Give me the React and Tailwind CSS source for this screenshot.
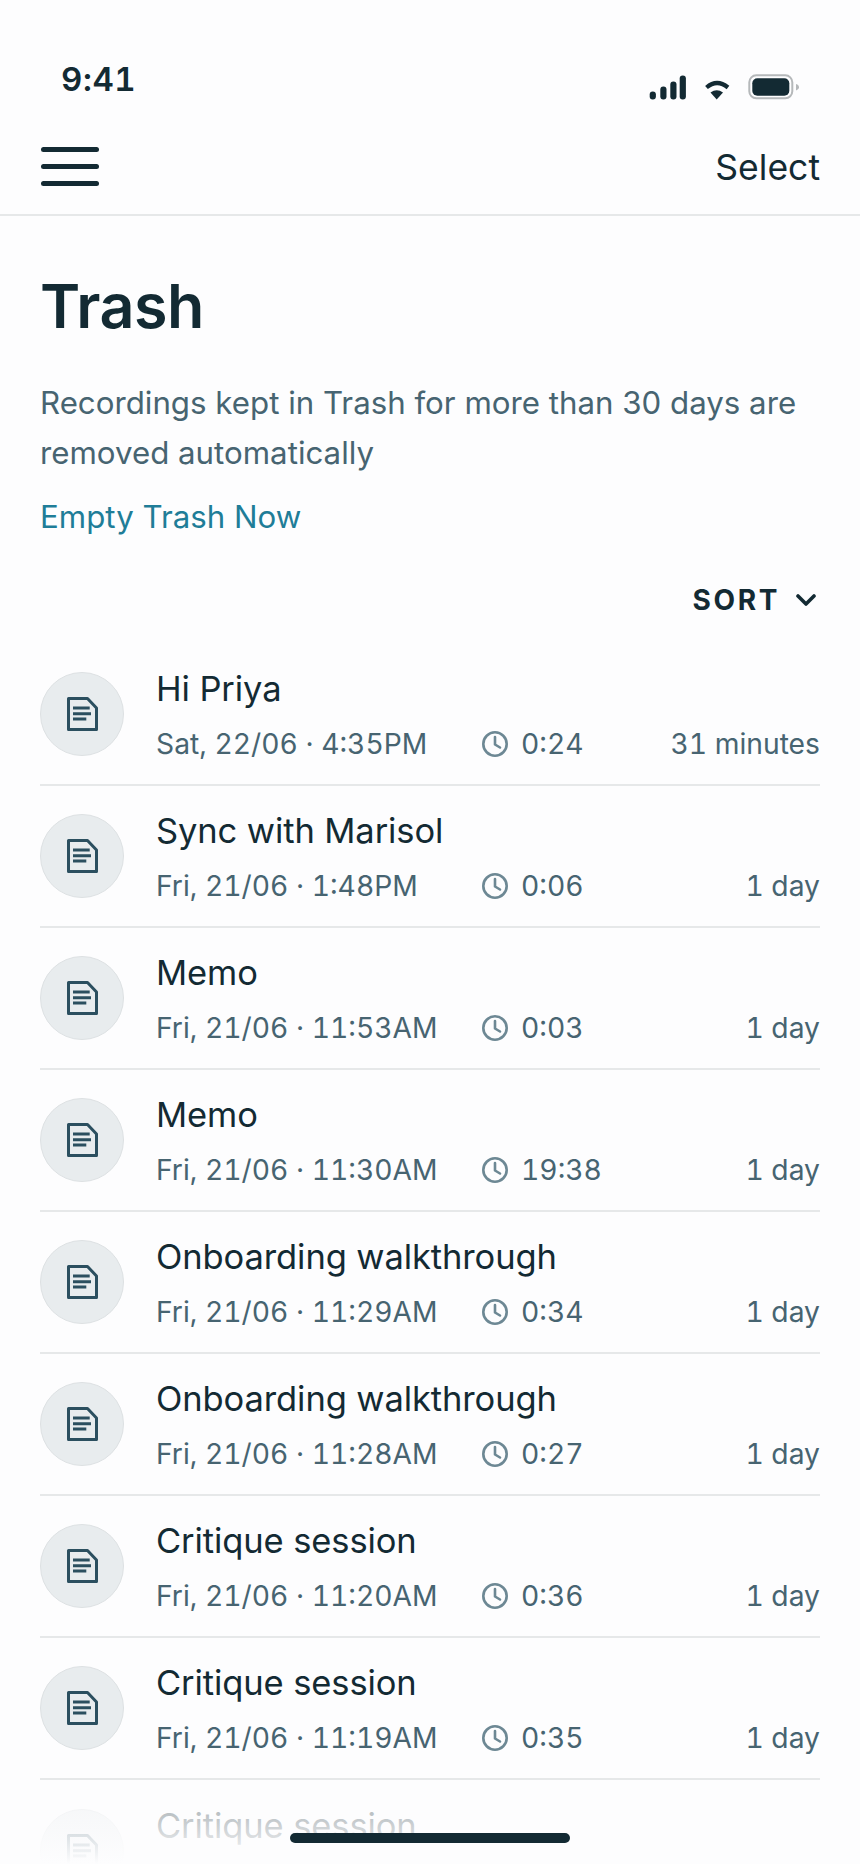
import React from "react";

const rows = [
  ["Hi Priya", "Sat, 22/06 · 4:35PM", "0:24", "31 minutes"],
  ["Sync with Marisol", "Fri, 21/06 · 1:48PM", "0:06", "1 day"],
  ["Memo", "Fri, 21/06 · 11:53AM", "0:03", "1 day"],
  ["Memo", "Fri, 21/06 · 11:30AM", "19:38", "1 day"],
  ["Onboarding walkthrough", "Fri, 21/06 · 11:29AM", "0:34", "1 day"],
  ["Onboarding walkthrough", "Fri, 21/06 · 11:28AM", "0:27", "1 day"],
  ["Critique session", "Fri, 21/06 · 11:20AM", "0:36", "1 day"],
  ["Critique session", "Fri, 21/06 · 11:19AM", "0:35", "1 day"],
  ["Critique session"],
];

function DocIcon() {
  return (
    <svg width="31" height="34" viewBox="0 0 31 34" fill="none">
      <path d="M1.5 1.5H20.5L29.5 11V32.5H1.5Z" stroke="#2b4f5f" strokeWidth="3" strokeLinejoin="round" />
      <path d="M6 11H22.7M6 16.7H24M6 22H19.3" stroke="#2b4f5f" strokeWidth="3" />
    </svg>
  );
}

function ClockIcon() {
  return (
    <svg width="28" height="28" viewBox="0 0 28 28" fill="none" stroke="#6d8894" strokeWidth="2.6" strokeLinecap="round" strokeLinejoin="round">
      <circle cx="14" cy="14" r="11.7" />
      <path d="M14 7V14.5L19 17.5" />
    </svg>
  );
}

function Row({ title, date, dur, left, last }) {
  return (
    <div className={"flex h-[142px] shrink-0 items-center border-[#e6e8e9] " + (last ? "" : "border-b-2")}>
      <div className="flex h-[84px] w-[84px] shrink-0 items-center justify-center rounded-full border border-[#dde1e3] bg-[#e8ecee]">
        <DocIcon />
      </div>
      <div className="ml-[32px] min-w-0 flex-1">
        <div className="text-[34.5px] leading-[44px] tracking-[-0.1px] text-[#132a33]">{title}</div>
        <div className="mt-[15px] flex h-[36px] items-center text-[28.25px] leading-[36px] text-[#476471] tabular-nums">
          {date && (
            <>
              <span className="w-[325px] shrink-0 whitespace-nowrap">{date}</span>
              <span className="flex items-center">
                <ClockIcon />
                <span className="ml-[12px]">{dur}</span>
              </span>
              <span className="ml-auto whitespace-nowrap">{left}</span>
            </>
          )}
        </div>
      </div>
    </div>
  );
}

export default function App() {
  return (
    <div className="relative flex h-[1864px] w-[860px] flex-col overflow-hidden bg-[#fdfdfe] font-['Inter',sans-serif]">
      <div className="flex h-[124px] shrink-0 items-end justify-between pb-[25px] pl-[61px] pr-[60px]">
        <span className="text-[33px] font-semibold leading-[40px] tracking-[0.6px] text-[#132a33] tabular-nums">9:41</span>
        <svg width="151" height="30" viewBox="0 0 151 30" className="mb-[-5px]">
          <g fill="#132a33">
            <rect x="0.7" y="17.5" width="6.2" height="8" rx="3" />
            <rect x="11.3" y="12.5" width="6.2" height="13" rx="3" />
            <rect x="21.3" y="7.5" width="6.2" height="18" rx="3" />
            <rect x="30.7" y="1.5" width="6.2" height="24" rx="3" />
            <path d="M61.5 18.5Q67.7 14 74 18.5L67.7 25.5Z" />
          </g>
          <path d="M57.5 13.5Q68 4.5 79 13.5" fill="none" stroke="#132a33" strokeWidth="4.2" />
          <rect x="100.3" y="1.3" width="43" height="23" rx="7" fill="none" stroke="#b5b8ba" strokeWidth="2" />
          <rect x="103.3" y="4.3" width="37" height="17.4" rx="5" fill="#132a33" />
          <path d="M147 10c2 .6 3 2 3 3.2s-1 2.6-3 3.2Z" fill="#b5b8ba" />
        </svg>
      </div>
      <div className="flex h-[92px] shrink-0 items-center justify-between border-b-2 border-[#e6e8e9] pb-[6px] pl-[41px] pr-[40px]">
        <div className="flex w-[58px] flex-col gap-[12px]">
          <div className="h-[5px] rounded-full bg-[#132a33]" />
          <div className="h-[5px] rounded-full bg-[#132a33]" />
          <div className="h-[5px] rounded-full bg-[#132a33]" />
        </div>
        <span className="mt-[3px] text-[35.5px] leading-[44px] text-[#132a33]">Select</span>
      </div>
      <div className="flex min-h-0 flex-1 flex-col px-[40px]">
        <h1 className="mt-[54px] text-[61px] font-semibold leading-[72px] tracking-[-0.5px] text-[#132a33]">Trash</h1>
        <p className="mt-[36px] text-[31.25px] leading-[50px] text-[#476471]">Recordings kept in Trash for more than 30 days are removed automatically</p>
        <div className="mt-[19px] text-[31.25px] leading-[40px] text-[#1f7d98]">Empty Trash Now</div>
        <div className="mr-[4px] mt-[45px] flex items-center justify-end gap-[16px] text-[28px] font-bold leading-[36px] tracking-[2.6px] text-[#132a33]">
          <span>SORT</span>
          <svg width="20" height="14" viewBox="0 0 20 14" fill="none" stroke="#132a33" strokeWidth="3.6" strokeLinecap="round" strokeLinejoin="round">
            <path d="M2 3l8 8 8-8" />
          </svg>
        </div>
        <div className="mt-[26px] flex flex-col">
          {rows.map((r, i) => (
            <Row key={i} title={r[0]} date={r[1]} dur={r[2]} left={r[3]} last={i === rows.length - 1} />
          ))}
        </div>
      </div>
      <div className="pointer-events-none absolute bottom-0 left-0 h-[72px] w-full bg-gradient-to-b from-[#fdfdfe]/60 to-[#fdfdfe]" />
      <div className="absolute bottom-[21px] left-[290px] h-[10px] w-[280px] rounded-full bg-[#132a33]" />
    </div>
  );
}
